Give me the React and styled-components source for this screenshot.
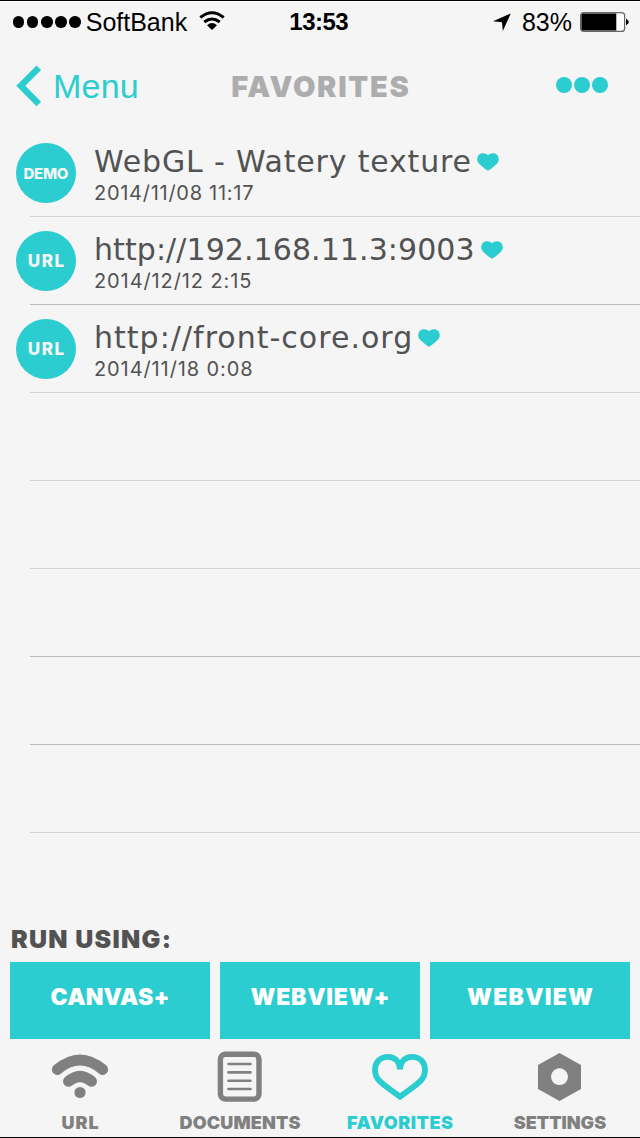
import React from "react";
import styled, { createGlobalStyle } from "styled-components";

const TEAL = "#2bcdd0";
const INK = "#525252";
const GREY = "#808080";

const GlobalStyle = createGlobalStyle`
  * { box-sizing: border-box; }
  body { margin: 0; background: #f5f5f5; }
  button { border: 0; background: none; padding: 0; font: inherit; color: inherit; }
`;

const Screen = styled.div`
  width: 640px;
  height: 1138px;
  display: flex;
  flex-direction: column;
  overflow: hidden;
  background: #f5f5f5;
  border-top: 1px solid #000;
  border-bottom: 1px solid #000;
  color: ${INK};
  font-family: Inter, sans-serif;
  white-space: nowrap;
`;

/* Text whose tracking does not shift its own centring. */
const Tracked = styled.span`
  display: block;
  letter-spacing: ${(p) => p.$tracking || 0}px;
  margin-right: ${(p) => -(p.$tracking || 0)}px;
`;

const StatusBar = styled.div`
  flex: none;
  height: 42px;
  display: grid;
  grid-template-columns: 1fr auto 1fr;
  align-items: center;
  padding: 0 14px 0 12px;
  color: #000;
  font: 25px/42px "Liberation Sans", sans-serif;
  box-shadow: inset 0 1px #fff;
`;

const StatusGroup = styled.div`
  display: flex;
  align-items: center;
  justify-content: ${(p) => (p.$end ? "flex-end" : "flex-start")};
`;

const Signal = styled.div`
  display: flex;
  gap: 2.7px;
  margin: 0 5px 0 1px;
`;

const SignalDot = styled.i`
  width: 11.4px;
  height: 11.4px;
  border-radius: 50%;
  background: #000;
`;

const Clock = styled(Tracked)`
  font-weight: 700;
  font-size: 24px;
`;

const StatusWifi = styled.svg`
  width: 26px;
  height: 20px;
  margin: 0 0 3px 12px;
`;

const Arrow = styled.svg`
  width: 18px;
  height: 18px;
  margin-right: 11px;
`;

const Battery = styled.svg`
  width: 49px;
  height: 20px;
  margin: 0 -3px 0 8px;
`;

const Header = styled.header`
  flex: none;
  height: 86px;
  display: grid;
  grid-template-columns: 1fr auto 1fr;
  align-items: center;
  padding: 0 16px;
`;

const BackButton = styled.button`
  display: flex;
  align-items: center;
  gap: 11px;
  color: ${TEAL};
  font: 34px/40px "Liberation Sans", sans-serif;
`;

const Chevron = styled.svg`
  width: 26px;
  height: 42px;
`;

const Title = styled.h1`
  margin: 2px 0 0;
  color: #adadad;
  font-size: 29px;
  font-weight: 900;
  line-height: 36px;
`;

const MoreButton = styled.button`
  justify-self: end;
  display: flex;
  gap: 2px;
  margin: -2px 16px 0 0;
`;

const MoreDot = styled.i`
  width: 16px;
  height: 16px;
  border-radius: 50%;
  background: ${TEAL};
`;

const List = styled.ul`
  flex: 1;
  margin: 0;
  padding: 0;
  list-style: none;
`;

const Item = styled.li`
  height: 88px;
  display: flex;
  flex-direction: column;
`;

const ItemBody = styled.div`
  flex: 1;
  display: flex;
  align-items: flex-start;
  gap: 18px;
  padding-left: 16px;
`;

const Divider = styled.div`
  height: 1px;
  margin-left: 30px;
  background: ${(p) => (p.$strong ? "#bcbcbf" : "#d2d2d3")};
`;

const Badge = styled.div`
  flex: none;
  width: 60px;
  height: 60px;
  margin-top: 14px;
  border-radius: 50%;
  display: flex;
  align-items: center;
  justify-content: center;
  background: ${TEAL};
  color: #f5f5f5;
  font-size: ${(p) => (p.$small ? 15 : 17)}px;
  font-weight: 800;
`;

const ItemText = styled.div`
  padding-top: 14px;
`;

const ItemTitle = styled.div`
  display: flex;
  align-items: center;
  font-family: "DejaVu Sans", sans-serif;
  font-size: 30px;
  line-height: 38px;
`;

const SmallHeart = styled.svg`
  width: 22px;
  height: 18px;
  margin-left: 6px;
  fill: ${TEAL};
`;

const ItemDate = styled.div`
  font-size: 20px;
  line-height: 25px;
`;

const RunPanel = styled.section`
  flex: none;
  padding: 0 10px;
`;

const RunLabel = styled.h2`
  margin: 0 0 8px;
  padding-left: 1px;
  font-size: 25px;
  font-weight: 900;
  line-height: 30px;
`;

const RunButtons = styled.div`
  display: grid;
  grid-template-columns: repeat(3, 1fr);
  gap: 10px;
`;

const RunButton = styled.button`
  height: 77px;
  display: flex;
  align-items: center;
  justify-content: center;
  padding-bottom: 7px;
  background: ${TEAL};
  color: #fff;
  font-size: 23px;
  font-weight: 900;
`;

const TabBar = styled.nav`
  flex: none;
  height: 98px;
  display: grid;
  grid-template-columns: repeat(4, 1fr);
`;

const Tab = styled.button`
  display: flex;
  flex-direction: column;
  align-items: center;
  padding-top: 11px;
  color: ${(p) => (p.$active ? TEAL : GREY)};
  font-size: 18px;
  font-weight: 900;
  line-height: 22px;
`;

const TabIcon = styled.svg`
  width: 60px;
  height: 52px;
  margin-bottom: 10px;
  fill: none;
  stroke: currentColor;
  stroke-linecap: round;
`;

const entries = [
  { kind: "DEMO", kindTracking: -0.3, title: "WebGL - Watery texture", tracking: 0.83, date: "2014/11/08 11:17", dateTracking: 0.72 },
  { kind: "URL", kindTracking: 1.6, title: "http://192.168.11.3:9003", tracking: 0.08, date: "2014/12/12 2:15", dateTracking: 0.9, strong: true },
  { kind: "URL", kindTracking: 1.6, title: "http://front-core.org", tracking: 1.02, date: "2014/11/18 0:08", dateTracking: 0.9 },
];

const emptyRows = [false, false, true, true, false];

const engines = [
  { name: "CANVAS+", tracking: 0.25 },
  { name: "WEBVIEW+", tracking: 0.8 },
  { name: "WEBVIEW", tracking: 1.25 },
];

const tabs = [
  {
    name: "URL",
    tracking: 1,
    icon: (
      <>
        <path d="M7.3 19.5Q30 .5 52.7 19.5" strokeWidth="10.8" />
        <path d="M18.4 31.4Q30 21.2 41.6 31.4" strokeWidth="10.8" />
        <circle cx="30" cy="42.5" r="5.6" fill="currentColor" stroke="none" />
      </>
    ),
  },
  {
    name: "DOCUMENTS",
    tracking: 0.15,
    icon: (
      <>
        <rect x="10.4" y="4.3" width="38.6" height="44.8" rx="5" strokeWidth="5.4" />
        <path d="M18.5 14h22M18.5 22.4h22M18.5 30.7h22M18.5 39h22" strokeWidth="2.6" />
      </>
    ),
  },
  {
    name: "FAVORITES",
    tracking: 0.55,
    active: true,
    icon: (
      <path
        d="M30 19.5C30 12 25 6.8 17.8 6.8C10 6.8 5 12.5 5 20C5 31 14 34.5 30 46.6C46 34.5 55 31 55 20C55 12.5 50 6.8 42.2 6.8C35 6.8 30 12 30 19.5Z"
        strokeWidth="5.8"
      />
    ),
  },
  {
    name: "SETTINGS",
    tracking: 0,
    icon: (
      <path
        d="M29.5 3L51 15V39L29.5 51L8 39V15ZM29.5 18.3a8.4 8.4 0 1 0 .01 0Z"
        fill="currentColor"
        fillRule="evenodd"
        stroke="none"
      />
    ),
  },
];

export default function App() {
  return (
    <>
      <GlobalStyle />
      <Screen>
        <StatusBar>
          <StatusGroup>
            <Signal>
              {[0, 1, 2, 3, 4].map((n) => (
                <SignalDot key={n} />
              ))}
            </Signal>
            <span>SoftBank</span>
            <StatusWifi viewBox="0 0 26 20" fill="none" stroke="#000" strokeWidth="2.9">
              <path d="M1.3 6.5Q13 -3 24.7 6.5M5.3 11Q13 4.8 20.7 11" />
              <path d="M8 14.2Q13 10 18 14.2L13 19Z" fill="#000" stroke="none" />
            </StatusWifi>
          </StatusGroup>
          <Clock $tracking={-0.5}>13:53</Clock>
          <StatusGroup $end>
            <Arrow viewBox="0 0 18 18">
              <path d="M0 8.2L17.8 .4L9.8 18L9 9.2Z" />
            </Arrow>
            <span>83%</span>
            <Battery viewBox="0 0 49 20">
              <rect x=".6" y=".6" width="44" height="18.8" rx="3" fill="#fff" stroke="#666" strokeWidth="1.2" />
              <path d="M3 1.4H36.3V18.6H3Q1.4 18.6 1.4 17V3Q1.4 1.4 3 1.4Z" />
              <path d="M46 6.8Q48.8 8 48.8 10T46 13.2Z" />
            </Battery>
          </StatusGroup>
        </StatusBar>

        <Header>
          <BackButton>
            <Chevron viewBox="0 0 26 42" fill="none" stroke="currentColor" strokeWidth="6.4">
              <path d="M22.8 2.7L4.8 20.8L22.8 38.9" />
            </Chevron>
            <Tracked $tracking={0.2}>Menu</Tracked>
          </BackButton>
          <Title>
            <Tracked $tracking={1.7}>FAVORITES</Tracked>
          </Title>
          <MoreButton aria-label="More">
            <MoreDot />
            <MoreDot />
            <MoreDot />
          </MoreButton>
        </Header>

        <List>
          {entries.map((e) => (
            <Item key={e.title}>
              <ItemBody>
                <Badge $small={e.kind.length > 3}>
                  <Tracked $tracking={e.kindTracking}>{e.kind}</Tracked>
                </Badge>
                <ItemText>
                  <ItemTitle>
                    <Tracked $tracking={e.tracking}>{e.title}</Tracked>
                    <SmallHeart viewBox="0 0 22 18">
                      <path d="M11 2.2C13.2 -.3 18 -.7 20.3 2.1C22.6 5 22 8.8 19.6 11C17 13.5 14.5 15.7 11 17.8C7.5 15.7 5 13.5 2.4 11C0 8.8-.6 5 1.7 2.1C4-.7 8.8-.3 11 2.2Z" />
                    </SmallHeart>
                  </ItemTitle>
                  <ItemDate>
                    <Tracked $tracking={e.dateTracking}>{e.date}</Tracked>
                  </ItemDate>
                </ItemText>
              </ItemBody>
              <Divider $strong={e.strong} />
            </Item>
          ))}
          {emptyRows.map((strong, n) => (
            <Item key={n}>
              <ItemBody />
              <Divider $strong={strong} />
            </Item>
          ))}
        </List>

        <RunPanel>
          <RunLabel>
            <Tracked $tracking={1.3}>RUN USING:</Tracked>
          </RunLabel>
          <RunButtons>
            {engines.map((e) => (
              <RunButton key={e.name}>
                <Tracked $tracking={e.tracking}>{e.name}</Tracked>
              </RunButton>
            ))}
          </RunButtons>
        </RunPanel>

        <TabBar>
          {tabs.map((t) => (
            <Tab key={t.name} $active={t.active}>
              <TabIcon viewBox="0 0 60 52">{t.icon}</TabIcon>
              <Tracked $tracking={t.tracking}>{t.name}</Tracked>
            </Tab>
          ))}
        </TabBar>
      </Screen>
    </>
  );
}
